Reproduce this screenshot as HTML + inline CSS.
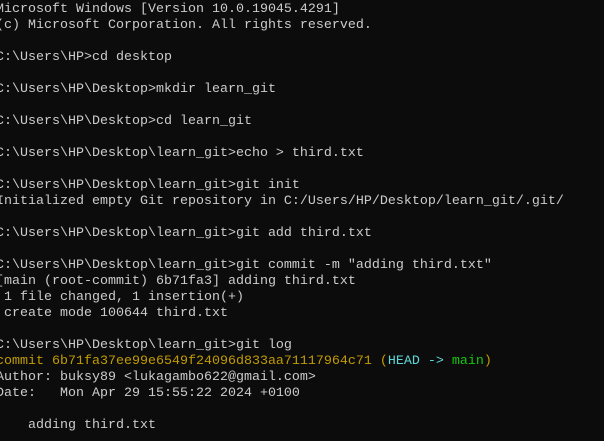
<!DOCTYPE html>
<html><head><meta charset="utf-8"><style>
html,body{margin:0;padding:0;background:#0c0c0c;width:604px;height:441px;overflow:hidden}
pre{margin:0;position:absolute;left:-4px;top:2px;font-family:"Liberation Mono",monospace;font-size:13.33px;line-height:16px;color:#cccccc;white-space:pre}
.y{color:#c19c00}.c{color:#61d6d6}.g{color:#16c60c}
</style></head><body><pre>Microsoft Windows [Version 10.0.19045.4291]
(c) Microsoft Corporation. All rights reserved.

C:\Users\HP>cd desktop

C:\Users\HP\Desktop>mkdir learn_git

C:\Users\HP\Desktop>cd learn_git

C:\Users\HP\Desktop\learn_git>echo > third.txt

C:\Users\HP\Desktop\learn_git>git init
Initialized empty Git repository in C:/Users/HP/Desktop/learn_git/.git/

C:\Users\HP\Desktop\learn_git>git add third.txt

C:\Users\HP\Desktop\learn_git>git commit -m "adding third.txt"
[main (root-commit) 6b71fa3] adding third.txt
 1 file changed, 1 insertion(+)
 create mode 100644 third.txt

C:\Users\HP\Desktop\learn_git>git log
<span class="y">commit 6b71fa37ee99e6549f24096d833aa71117964c71 (</span><span class="c">HEAD -&gt; </span><span class="g">main</span><span class="y">)</span>
Author: buksy89 &lt;lukagambo622@gmail.com&gt;
Date:   Mon Apr 29 15:55:22 2024 +0100

    adding third.txt
</pre></body></html>
